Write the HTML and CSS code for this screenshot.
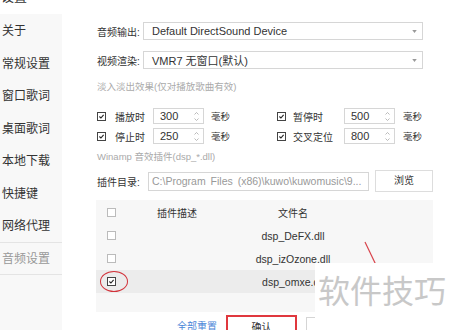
FILE: index.html
```html
<!DOCTYPE html>
<html lang="zh-CN">
<head>
    <meta charset="UTF-8">
    <meta name="viewport" content="width=device-width, initial-scale=1.0">
    <title>音频设置</title>
    <link rel="stylesheet" href="styles.css">
</head>
<body>
<div class="title"><span>设置</span></div>

<div class="main">
    <ul class="side">
        <li>关于</li>
        <li>常规设置</li>
        <li>窗口歌词</li>
        <li>桌面歌词</li>
        <li>本地下载</li>
        <li>快捷键</li>
        <li class="line">网络代理</li>
        <li class="line current">音频设置</li>
    </ul>

    <div class="content">
        <div class="field">
            <span class="label">音频输出:</span>
            <div class="select">Default DirectSound Device
                <svg class="caret" viewBox="0 0 6 4"><path d="M0 0 L6 0 L3 4 Z"/></svg>
            </div>
        </div>
        <div class="field">
            <span class="label">视频渲染:</span>
            <div class="select">VMR7 无窗口(默认)
                <svg class="caret" viewBox="0 0 6 4"><path d="M0 0 L6 0 L3 4 Z"/></svg>
            </div>
        </div>

        <div class="hint">淡入淡出效果(仅对播放歌曲有效)</div>

        <div class="spins">
            <div class="spin-row">
                <span class="cb on"><svg viewBox="0 0 10 10"><path d="M2 5 L4.2 7.2 L8 2.8"/></svg></span>
                <span class="opt">播放时</span>
                <div class="spin"><span>300</span>
                    <svg class="arrows" viewBox="0 0 5 11"><path d="M0.5 3.5 L2.5 1.5 L4.5 3.5 M0.5 7.5 L2.5 9.5 L4.5 7.5"/></svg>
                </div>
                <span class="unit">毫秒</span>
                <span class="cb on"><svg viewBox="0 0 10 10"><path d="M2 5 L4.2 7.2 L8 2.8"/></svg></span>
                <span class="opt wide">暂停时</span>
                <div class="spin"><span>500</span>
                    <svg class="arrows" viewBox="0 0 5 11"><path d="M0.5 3.5 L2.5 1.5 L4.5 3.5 M0.5 7.5 L2.5 9.5 L4.5 7.5"/></svg>
                </div>
                <span class="unit last">毫秒</span>
            </div>
            <div class="spin-row">
                <span class="cb on"><svg viewBox="0 0 10 10"><path d="M2 5 L4.2 7.2 L8 2.8"/></svg></span>
                <span class="opt">停止时</span>
                <div class="spin"><span>250</span>
                    <svg class="arrows" viewBox="0 0 5 11"><path d="M0.5 3.5 L2.5 1.5 L4.5 3.5 M0.5 7.5 L2.5 9.5 L4.5 7.5"/></svg>
                </div>
                <span class="unit">毫秒</span>
                <span class="cb on"><svg viewBox="0 0 10 10"><path d="M2 5 L4.2 7.2 L8 2.8"/></svg></span>
                <span class="opt wide">交叉定位</span>
                <div class="spin"><span>800</span>
                    <svg class="arrows" viewBox="0 0 5 11"><path d="M0.5 3.5 L2.5 1.5 L4.5 3.5 M0.5 7.5 L2.5 9.5 L4.5 7.5"/></svg>
                </div>
                <span class="unit last">毫秒</span>
            </div>
        </div>

        <div class="hint small">Winamp 音效插件(dsp_*.dll)</div>

        <div class="dir">
            <span class="label">插件目录:</span>
            <div class="path">C:\Program Files (x86)\kuwo\kuwomusic\9...</div>
            <div class="browse">浏览</div>
        </div>

        <div class="plugins">
            <div class="prow head">
                <span class="cb"></span>
                <span class="col">插件描述</span>
                <span class="col">文件名</span>
            </div>
            <div class="prow">
                <span class="cb"></span>
                <span class="col"></span>
                <span class="col file">dsp_DeFX.dll</span>
            </div>
            <div class="prow">
                <span class="cb"></span>
                <span class="col"></span>
                <span class="col file">dsp_izOzone.dll</span>
            </div>
            <div class="prow picked">
                <span class="cb on"><svg viewBox="0 0 10 10"><path d="M2 5 L4.2 7.2 L8 2.8"/></svg></span>
                <span class="col"></span>
                <span class="col file">dsp_omxe.dll</span>
                <span class="ring"></span>
            </div>
        </div>

        <div class="actions">
            <a class="reset">全部重置</a>
            <div class="btn marked">确认</div>
            <div class="btn cancel">取消</div>
        </div>
    </div>
</div>

<!-- annotations from the original screenshot -->
<svg class="arrow" viewBox="0 0 20 30"><path d="M5 4 L16 27"/></svg>
<div class="watermark">软件技巧</div>
</body>
</html>
```

FILE: styles.css
```css
body {
    margin: 0;
    width: 450px;
    height: 330px;
    overflow: hidden;
    position: relative;
    background-color: #fff;
    color: #333;
    font-family: "Liberation Sans", "Noto Sans CJK SC", sans-serif;
}

.title {
    height: 14px;
    overflow: hidden;
}

.title span {
    display: block;
    margin-top: -10px;
    padding-left: 1px;
    font-size: 13px;
    line-height: 13px;
}

.main {
    display: flex;
    height: 316px;
}

/* left menu */
.side {
    list-style: none;
    margin: 0;
    padding: 1px 0 0;
    width: 62px;
    background-color: #f8f8f8;
    font-size: 12px;
}

.side li {
    height: 32.5px;
    line-height: 32.5px;
    padding-left: 2px;
    box-sizing: border-box;
}

.side li.line {
    border-bottom: 1px solid #e4e4e4;
}

.side li.current {
    color: #999;
}

/* right panel */
.content {
    flex: 1;
    padding: 8px 0 0 35px;
    font-size: 10px;
}

.field {
    display: flex;
    align-items: center;
    height: 18px;
}

.field + .field {
    margin-top: 11px;
}

.label {
    width: 46px;
    white-space: nowrap;
}

.select {
    display: flex;
    align-items: center;
    justify-content: space-between;
    width: 280px;
    height: 18px;
    box-sizing: border-box;
    padding: 0 5px 0 8px;
    border: 1px solid #d6d6d6;
    font-size: 11px;
}

.caret {
    width: 5px;
    height: 3px;
    fill: #999;
}

.hint {
    margin-top: 11px;
    line-height: 14px;
    font-size: 9.5px;
    color: #aaa;
}

.hint.small {
    margin-top: 6px;
}

.spins {
    margin-top: 14px;
}

.spin-row {
    display: flex;
    align-items: center;
    height: 16px;
}

.spin-row + .spin-row {
    margin-top: 4px;
}

.cb {
    display: block;
    width: 9px;
    height: 9px;
    box-sizing: border-box;
    border: 1px solid #bbb;
    background-color: #fff;
    margin-right: 9px;
}

.cb.on {
    border-color: #444;
}

.cb svg {
    display: block;
    width: 7px;
    height: 7px;
    fill: none;
    stroke: #222;
    stroke-width: 1.6;
}

.opt {
    width: 38px;
    white-space: nowrap;
}

.opt.wide {
    width: 51px;
}

.spin-row .cb + .opt.wide {
    margin-left: -2px;
}

.spin {
    display: flex;
    align-items: center;
    justify-content: space-between;
    width: 51px;
    height: 16px;
    box-sizing: border-box;
    padding: 0 4px 0 6px;
    border: 1px solid #d6d6d6;
    font-size: 11px;
}

.arrows {
    width: 5px;
    height: 11px;
    fill: none;
    stroke: #aaa;
    stroke-width: 0.8;
}

.unit {
    width: 66px;
    margin-left: 7px;
    font-size: 9.5px;
}

.unit.last {
    width: auto;
    margin-left: 8px;
}

.dir {
    display: flex;
    align-items: center;
    height: 22px;
    margin-top: 6px;
}

.dir .label {
    width: 51px;
}

.path {
    width: 221px;
    height: 19px;
    line-height: 17px;
    box-sizing: border-box;
    padding: 0 3px;
    border: 1px solid #d6d6d6;
    color: #999;
    font-size: 10.5px;
    word-spacing: 2px;
    white-space: nowrap;
    overflow: hidden;
}

.browse {
    width: 58px;
    height: 22px;
    line-height: 20px;
    box-sizing: border-box;
    margin-left: 6px;
    border: 1px solid #ddd;
    text-align: center;
}

/* plugin list */
.plugins {
    width: 337px;
    height: 112px;
    margin: 8px 0 0 -1px;
    background-color: #f7f7f7;
}

.prow {
    position: relative;
    display: grid;
    grid-template-columns: 30px 102px 130px;
    align-items: center;
    height: 23px;
}

.prow.head {
    height: 24px;
}

.prow .cb {
    margin-left: 11px;
}

.prow.picked {
    background-color: #ececec;
}

.col {
    text-align: center;
}

.file {
    font-size: 10.5px;
}

.ring {
    position: absolute;
    left: 4px;
    top: 1px;
    width: 28px;
    height: 21px;
    box-sizing: border-box;
    border: 1.5px solid #d2323a;
    border-radius: 50%;
}

/* bottom buttons */
.actions {
    display: flex;
    align-items: flex-start;
    margin-top: 3px;
    padding-left: 80px;
}

.reset {
    margin-top: 6px;
    line-height: 12px;
    color: #4a86d8;
}

.btn {
    width: 71px;
    height: 26px;
    line-height: 22px;
    box-sizing: border-box;
    text-align: center;
    background-color: #fff;
}

.btn.marked {
    margin-left: 9px;
    border: 2px solid #e0383e;
}

.btn.cancel {
    margin: 2px 0 0 9px;
    border: 1px solid #d5d5d5;
}

.arrow {
    position: absolute;
    left: 360px;
    top: 238px;
    width: 20px;
    height: 30px;
    fill: none;
    stroke: #d8424a;
    stroke-width: 1.2;
}

.watermark {
    position: absolute;
    left: 315px;
    top: 263px;
    width: 135px;
    height: 67px;
    box-sizing: border-box;
    padding: 13px 0 0 3px;
    background-color: #fff;
    color: #c8c8c8;
    font-size: 32px;
    line-height: 32px;
    white-space: nowrap;
}
```
